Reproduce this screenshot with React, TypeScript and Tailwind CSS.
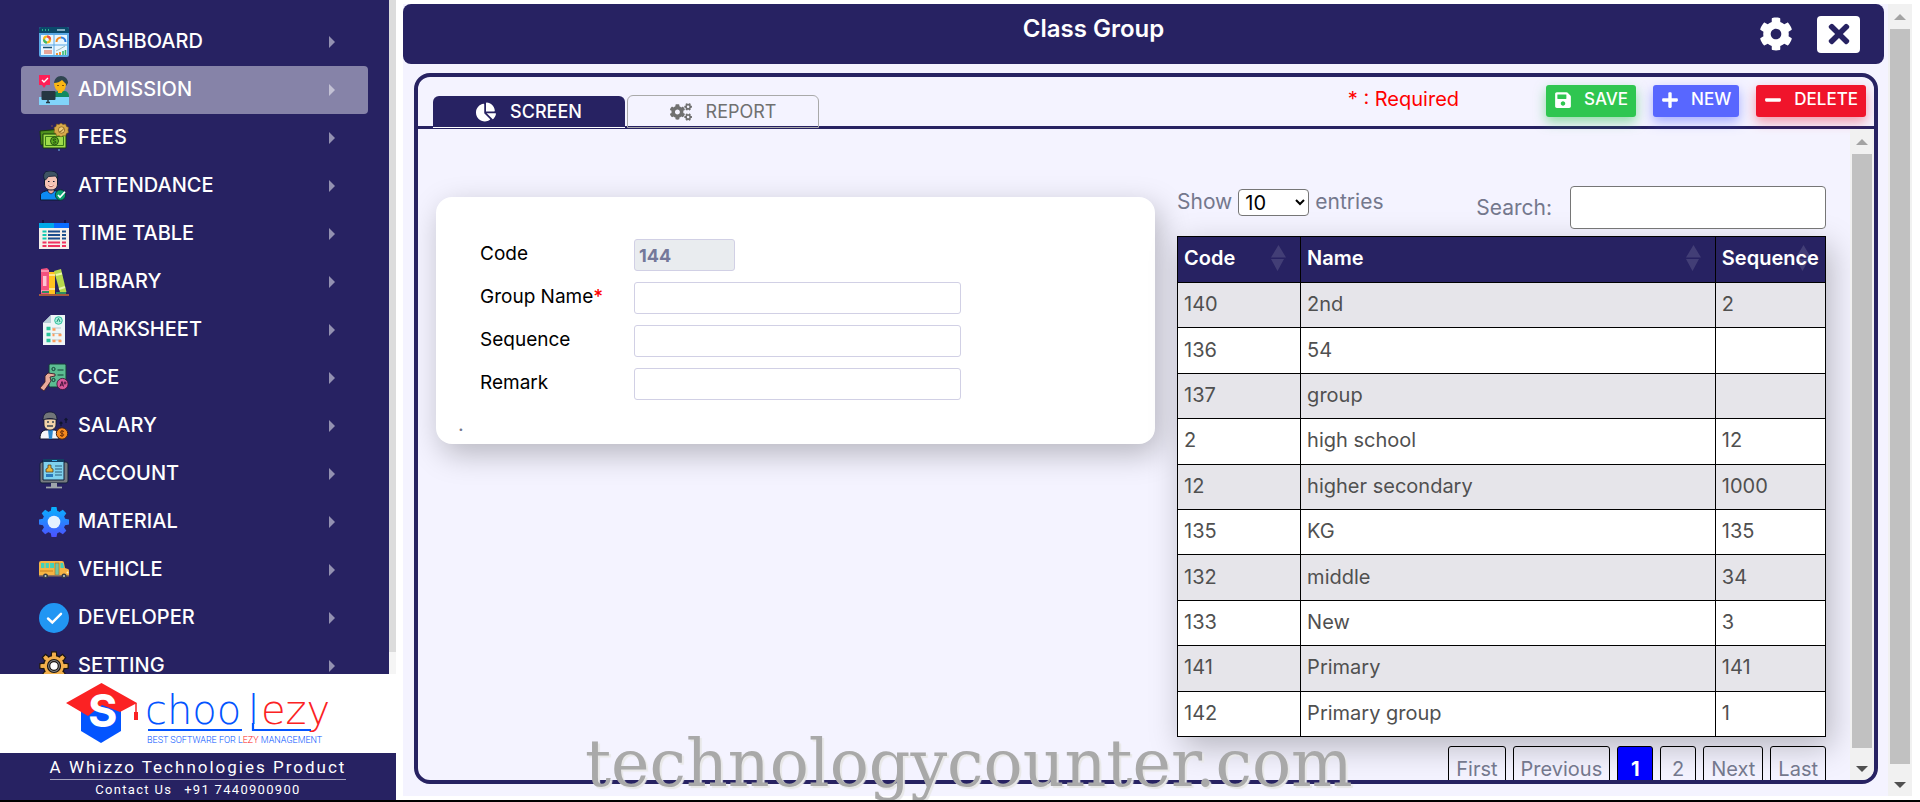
import React, { useState } from "react";
import { FaChartPie, FaCog, FaCogs, FaMinus, FaPlus, FaSave, FaTimes } from "react-icons/fa";

const menuItems = [
  { name: "DASHBOARD", icon: <DashboardIcon /> },
  { name: "ADMISSION", icon: <AdmissionIcon /> },
  { name: "FEES", icon: <FeesIcon /> },
  { name: "ATTENDANCE", icon: <AttendanceIcon /> },
  { name: "TIME TABLE", icon: <TimeTableIcon /> },
  { name: "LIBRARY", icon: <LibraryIcon /> },
  { name: "MARKSHEET", icon: <MarksheetIcon /> },
  { name: "CCE", icon: <CceIcon /> },
  { name: "SALARY", icon: <SalaryIcon /> },
  { name: "ACCOUNT", icon: <AccountIcon /> },
  { name: "MATERIAL", icon: <MaterialIcon /> },
  { name: "VEHICLE", icon: <VehicleIcon /> },
  { name: "DEVELOPER", icon: <DeveloperIcon /> },
  { name: "SETTING", icon: <SettingIcon /> },
];

const groups = [
  { code: "140", name: "2nd", sequence: "2" },
  { code: "136", name: "54", sequence: "" },
  { code: "137", name: "group", sequence: "" },
  { code: "2", name: "high school", sequence: "12" },
  { code: "12", name: "higher secondary", sequence: "1000" },
  { code: "135", name: "KG", sequence: "135" },
  { code: "132", name: "middle", sequence: "34" },
  { code: "133", name: "New", sequence: "3" },
  { code: "141", name: "Primary", sequence: "141" },
  { code: "142", name: "Primary group", sequence: "1" },
];

const columns = [
  { label: "Code", width: "w-[19%]" },
  { label: "Name", width: "w-[64%]" },
  { label: "Sequence", width: "w-[17%]" },
];

const pages = ["First", "Previous", "1", "2", "Next", "Last"];

const gearTeeth = [0, 45, 90, 135, 180, 225, 270, 315];

function Svg({ children }: { children: React.ReactNode }) {
  return (
    <svg viewBox="0 0 30 30" className="size-[30px] shrink-0" aria-hidden="true">
      {children}
    </svg>
  );
}

function DashboardIcon() {
  return (
    <Svg>
      <rect x="0" y="0" width="30" height="30" rx="2" fill="#5aa9e6" />
      <path d="M0 6V2a2 2 0 0 1 2-2h26a2 2 0 0 1 2 2v4z" fill="#0b4a6b" />
      <path d="M3 3h1M6 3h1M9 3h1" stroke="#3ddc97" strokeWidth="1.4" />
      <path d="M18 3h8" stroke="#b9d7e8" strokeWidth="1.4" />
      <rect x="2" y="8" width="12.5" height="9.5" fill="#e8f6ff" />
      <rect x="15.5" y="8" width="12.5" height="9.5" fill="#e8f6ff" />
      <rect x="2" y="18.5" width="12.5" height="9.5" fill="#e8f6ff" />
      <rect x="15.5" y="18.5" width="12.5" height="9.5" fill="#e8f6ff" />
      <circle cx="8" cy="12.5" r="3" fill="none" stroke="#f6b91a" strokeWidth="2.2" />
      <path d="M8 9.5a3 3 0 0 1 3 3" fill="none" stroke="#e94c4c" strokeWidth="2.2" />
      <path d="M8 15.5a3 3 0 0 1-3-3" fill="none" stroke="#35b96f" strokeWidth="2.2" />
      <path d="M17.5 15a4.5 4.5 0 0 1 4.5-4.5" fill="none" stroke="#f08a24" strokeWidth="2" />
      <path d="M22 10.5a4.5 4.5 0 0 1 4.5 4.5" fill="none" stroke="#2f7fe0" strokeWidth="2" />
      <path d="M4 20.5h9" stroke="#184f72" strokeWidth="1.5" />
      <path d="M5 24h8M5 26h8" stroke="#e58a7a" strokeWidth="1.3" />
      <path d="M17 24l4-2 5-3" stroke="#8aa" strokeWidth="0.8" fill="none" />
      <path d="M18 28v-2M21 28v-3" stroke="#f08a24" strokeWidth="1.8" />
      <path d="M24 28v-4M26.5 28v-5" stroke="#35b96f" strokeWidth="1.6" />
    </Svg>
  );
}

function AdmissionIcon() {
  return (
    <Svg>
      <path d="M13 22c0-4 4-6 8-6h4c3 0 5 2 5 5v3H13z" fill="#128a5f" />
      <path d="M15 9c0-5 3-8 7-8s7 3 7 7l-2 3h-4z" fill="#2f4550" />
      <path d="M15 8c3 0 6-1 8-3l4 4c0 4-2 7-4 8v1h-4v-2c-2-1-4-4-4-8z" fill="#fbb713" />
      <path d="M18 10.5h2M23 10.5h2" stroke="#7a4b05" strokeWidth="0.9" />
      <path d="M0 22h30v8H0z" fill="#81d4fa" />
      <path d="M0 0h11v10H7l-2 3-2-3H0z" fill="#ff1f57" />
      <path d="M3 5l2 2 4-4" stroke="#fff" strokeWidth="1.4" fill="none" />
      <rect x="2.5" y="16" width="14" height="9" rx="1" fill="#263742" />
      <path d="M9 25v3M7 27.5h4" stroke="#263742" strokeWidth="1.5" />
    </Svg>
  );
}

function FeesIcon() {
  return (
    <Svg>
      <path d="M1 8l22-2v14L2 22z" fill="#4f8f1d" stroke="#173a0c" />
      <path d="M4 11h23v14H4z" fill="#9fdc4a" stroke="#173a0c" />
      <path d="M6.5 13.5h18v9h-18z" fill="none" stroke="#3b7d16" />
      <circle cx="15.5" cy="18" r="4" fill="#5cab22" stroke="#173a0c" strokeWidth="0.8" />
      <path d="M17 16.5c-3-1.5-4 1-1.5 1.5s1.5 3-1.5 1.7" fill="none" stroke="#173a0c" strokeWidth="0.9" />
      <path d="M22 0l2 1.5 2.5-.5 1 2.5 2 1-.5 2.5.5 2.5-2 1-1 2.5-2.5-.5-2 1.5-2-1.5-2.5.5-.5-2.5-2-1 .5-2.5-.5-2.5 2-1 .5-2.5 2.5.5z" fill="#d6a94a" stroke="#7c5618" strokeWidth="0.6" />
      <circle cx="22.5" cy="7" r="3.2" fill="#f0cd78" stroke="#7c5618" strokeWidth="0.7" />
      <path d="M20.5 8.5c2 0 3-1 4-3" stroke="#7c5618" fill="none" />
      <circle cx="20" cy="27" r="1" fill="#5a8ac9" />
      <circle cx="13" cy="3" r="0.7" fill="#b0683a" />
    </Svg>
  );
}

function AttendanceIcon() {
  return (
    <Svg>
      <path d="M1.5 29v-5c0-2 3-4 8-4.5h5c3 .5 6 1 7 3v6.5z" fill="#0d8bf2" stroke="#0c1830" />
      <path d="M9 16h6v5l-3 2-3-2z" fill="#eba79a" stroke="#0c1830" strokeWidth="0.7" />
      <path d="M5.5 6c0-4 3-5 6.5-5s6.5 1 6.5 5v7c0 4-3 6-6.5 6s-6.5-2-6.5-6z" fill="#f5c3b5" stroke="#0c1830" />
      <path d="M5 8c-1-4 0-6 2-7.5C11-.5 15 0 17 1.5c2 1.5 2 4 1.5 6.5l-2-3-7 .5L6.5 9z" fill="#3f5363" stroke="#0c1830" strokeWidth="0.8" />
      <path d="M9 10.5h1.5M14 10.5h1.5" stroke="#0c1830" strokeWidth="1.2" />
      <path d="M9.5 14.5c1.5 1.5 3.5 1.5 5 0" stroke="#a0403a" fill="#fff" strokeWidth="0.8" />
      <circle cx="21.5" cy="24" r="5.2" fill="#0aa06e" stroke="#0c2a30" strokeWidth="0.8" />
      <path d="M19 24l2 2.2 5-5.5" stroke="#fff" strokeWidth="1.7" fill="none" />
    </Svg>
  );
}

function TimeTableIcon() {
  return (
    <Svg>
      <path d="M0 4h15v5H0z" fill="#00a8e8" />
      <path d="M15 4h15v5H15z" fill="#0a6cff" />
      <path d="M0 9h30v21H0z" fill="#f6efe9" />
      <path d="M4 1v3M26 1v3" stroke="#14123f" strokeWidth="2" />
      <path d="M3.5 12.5h4M3.5 16h4M3.5 19.5h4" stroke="#12c9b2" strokeWidth="2.2" />
      <path d="M9 12.5h12M9 16h12M9 19.5h12M23 12.5h4M23 16h4M23 19.5h4" stroke="#1b4e8c" strokeWidth="2" />
      <path d="M3.5 23.5h4M9 23.5h12M23 23.5h4M3.5 27h4M9 27h12M23 27h4" stroke="#f0325f" strokeWidth="2.2" />
    </Svg>
  );
}

function LibraryIcon() {
  return (
    <Svg>
      <path d="M2 2l6-1 2 2v24H2z" fill="#f4527f" />
      <path d="M4 9h3.5v10H4z" fill="#ffc4d2" />
      <path d="M2 4h8M2 24h8" stroke="#ffd2dc" />
      <path d="M10 5h6v22h-6z" fill="#ffc21f" />
      <path d="M10 8h6M10 22h6" stroke="#fff0b3" strokeWidth="1.5" />
      <path d="M15 4l7-2 5.5 23-6 2z" fill="#b7d94c" />
      <path d="M17 8l6-1.5M20 22l6-2" stroke="#eaf7a8" strokeWidth="2" />
      <path d="M3 25h7M17 26h10" stroke="#2f8d62" strokeWidth="2" />
      <path d="M0 27h30v2H0z" fill="#a65a3e" />
    </Svg>
  );
}

function MarksheetIcon() {
  return (
    <Svg>
      <path d="M12 0h14v30H4V8z" fill="#eef5f6" />
      <path d="M12 0v8H4z" fill="#b8cfd8" />
      <circle cx="19.5" cy="5.5" r="3.8" fill="#a8efdc" stroke="#23bb96" strokeWidth="0.9" />
      <path d="M17.8 7l1.7-3.5L21 7" stroke="#148a6d" strokeWidth="0.9" fill="none" />
      <path d="M7.5 13.5h4M7.5 19.5h4M7.5 25.5h4" stroke="#2bc39c" strokeWidth="3.4" />
      <path d="M13 13h9M13 18.5h9M13 25h9" stroke="#b9ccd2" strokeWidth="1.2" />
      <path d="M13.5 14.5h3M19.5 20h3M13.5 20h2M19.5 26h3M13.5 26h3" stroke="#ff9c5a" strokeWidth="2.4" />
    </Svg>
  );
}

function CceIcon() {
  return (
    <Svg>
      <rect x="10" y="1" width="17" height="23" rx="1.5" fill="#5bbd92" stroke="#163d38" />
      <circle cx="14.5" cy="6" r="1.6" fill="none" stroke="#143a35" />
      <circle cx="14.5" cy="17" r="1.6" fill="none" stroke="#143a35" />
      <path d="M18.5 7h6M18.5 12h6" stroke="#143a35" strokeWidth="1.2" />
      <path d="M1 25l5-6v-6l3-3 7 1v2l-5 1 1 4-7 10z" fill="#e9ab9a" stroke="#3a1e2b" strokeWidth="0.9" />
      <circle cx="23.5" cy="21" r="5.6" fill="#d8579a" stroke="#40143a" strokeWidth="0.9" />
      <path d="M21 23.5l2-5 1.5 5M21.5 22h2.5M26 18.5v3M24.7 20h2.8" stroke="#40143a" fill="none" />
    </Svg>
  );
}

function SalaryIcon() {
  return (
    <Svg>
      <path d="M1 28c0-7 3-9 7-9h6c4 0 6 2 6 9z" fill="#f4f6f8" stroke="#10152f" />
      <path d="M9 19h5l-1 9h-3z" fill="#2e86c9" />
      <path d="M5 8h12v5c0 4-3 6-6 6s-6-2-6-6z" fill="#f3d3aa" stroke="#10152f" strokeWidth="0.8" />
      <path d="M4 9c0-5 2-8 7-8s7 3 7 8c-4-2-10-2-14 0z" fill="#717579" stroke="#10152f" strokeWidth="0.8" />
      <path d="M8 11h2M13 11h2M8 15h6" stroke="#3b4754" strokeWidth="1.5" />
      <circle cx="23" cy="22.5" r="5.7" fill="#f58a1f" stroke="#452211" />
      <path d="M25 20.5c-3.5-1.5-5 1.3-2 2s2 3.5-2 1.8M23 19v7" stroke="#6b2e0a" fill="none" />
      <path d="M22 15v-4M20.5 12.5L22 11l1.5 1.5M27 12V7M25.5 9L27 7.5 28.5 9" stroke="#10152f" strokeWidth="1.2" fill="none" />
    </Svg>
  );
}

function AccountIcon() {
  return (
    <Svg>
      <path d="M1 5a2 2 0 0 1 2-2h24a2 2 0 0 1 2 2v17a2 2 0 0 1-2 2H3a2 2 0 0 1-2-2z" fill="#767b80" stroke="#12203a" />
      <path d="M4 1h21v20H4z" fill="#80d2ee" stroke="#12203a" />
      <path d="M4 0h21v3H4z" fill="#123f63" />
      <path d="M13 1.5h5" stroke="#3bb4f0" />
      <path d="M7 13v-3l2-1V6h3v3l2 1v3z" fill="#e7b63b" stroke="#493014" strokeWidth="0.7" />
      <path d="M7 15h7v3H7z" fill="#2879bd" />
      <path d="M16 7h7M16 10h7M16 13h7M16 16h7" stroke="#2c5f7d" strokeWidth="1.2" />
      <path d="M12 24h6v4h-6z" fill="#9ea5aa" />
      <path d="M7 28.5h16" stroke="#9ea5aa" strokeWidth="1.7" />
    </Svg>
  );
}

function MaterialIcon() {
  return (
    <Svg>
      <defs>
        <linearGradient id="gear-blue" x1="0" y1="0" x2="0" y2="30" gradientUnits="userSpaceOnUse">
          <stop stopColor="#06b3ff" />
          <stop offset="1" stopColor="#4d50ff" />
        </linearGradient>
      </defs>
      <g fill="url(#gear-blue)">
        <circle cx="15" cy="15" r="11.5" />
        <path d="M12.5 0h5l1 5h-7zM12.5 30h5l1-5h-7zM0 12.5v5l5 1v-7zM30 12.5v5l-5 1v-7zM2.7 6.2l3.5-3.5 4.5 3-5 5zM27.3 6.2l-3.5-3.5-4.5 3 5 5zM2.7 23.8l3.5 3.5 4.5-3-5-5zM27.3 23.8l-3.5 3.5-4.5-3 5-5z" />
      </g>
      <circle cx="15" cy="15" r="6.3" fill="#e4f1ff" />
    </Svg>
  );
}

function VehicleIcon() {
  return (
    <Svg>
      <path d="M0 8a2 2 0 0 1 2-2h21a2 2 0 0 1 2 2l1 5 3 1a2 2 0 0 1 1 2v5H0z" fill="#f6b444" />
      <path d="M2 8h13v5H2z" fill="#3fd2bd" />
      <path d="M6 8v5M10.5 8v5" stroke="#f6b444" strokeWidth="1.2" />
      <path d="M16 8h4v12h-4z" fill="#71c4a4" stroke="#a67323" strokeWidth="0.6" />
      <path d="M21.5 8h2.5l1 5h-3.5z" fill="#3fd2bd" />
      <path d="M1 16h13" stroke="#c97e1e" />
      <path d="M0 20h30v1.5H0z" fill="#92755b" />
      <circle cx="6.5" cy="21" r="2.5" fill="#343c45" />
      <circle cx="6.5" cy="21" r="1" fill="#c5cdd2" />
      <circle cx="25" cy="21" r="2.5" fill="#343c45" />
      <circle cx="25" cy="21" r="1" fill="#c5cdd2" />
      <circle cx="28.5" cy="17.5" r="1" fill="#fff0b0" />
    </Svg>
  );
}

function DeveloperIcon() {
  return (
    <Svg>
      <circle cx="15" cy="15" r="15" fill="#2196f3" />
      <path d="M9 15.5l4.3 4L22 10.8" stroke="#fff" strokeWidth="2.4" fill="none" strokeLinecap="round" />
    </Svg>
  );
}

function SettingIcon() {
  return (
    <Svg>
      <g fill="#f3b04c" stroke="#1c1611" strokeWidth="1.2">
        {gearTeeth.map((angle) => (
          <path key={angle} d="M12 6l.8-5.2h4.4L18 6z" transform={`rotate(${angle} 15 15)`} />
        ))}
        <circle cx="15" cy="15" r="10.5" />
      </g>
      {/* covers the outlines where the teeth meet the rim */}
      {gearTeeth.map((angle) => (
        <path key={angle} d="M12.8 6.5l.6-4.5h3.2l.6 4.5z" fill="#f3b04c" transform={`rotate(${angle} 15 15)`} />
      ))}
      <circle cx="15" cy="15" r="6.5" fill="#84888c" stroke="#1c1611" strokeWidth="1.2" />
      <circle cx="15" cy="15" r="4.3" fill="#fff" stroke="#1c1611" strokeWidth="1.2" />
    </Svg>
  );
}

const BrandLogo = () => (
  <svg viewBox="0 0 264 66" className="h-[66px] w-[264px]" role="img" aria-label="Schoolezy">
    <path d="M15 28l20-10 20 10v22l-20 12-20-12z" fill="#0354ff" />
    <path d="M0 22L35.5 2 71 22 54 31 36 24 22 35z" fill="#fb2223" />
    <path d="M70 22v12" stroke="#fb2223" strokeWidth="1.5" />
    <path d="M68 31h4v8h-4z" fill="#fb2223" />
    <text x="22" y="46" fontFamily="Inter, sans-serif" fontSize="45" fontWeight="700" fill="#fff">
      S
    </text>
    <g fontFamily="DejaVu Sans, sans-serif" fontSize="40" fontWeight="200">
      <text x="79" y="43" fill="#0354ff">choo</text>
      <text x="182" y="43" fill="#0354ff">l</text>
      <text x="195" y="43" fill="#fb2223">ezy</text>
    </g>
    <path d="M82 49h94M187 42v7h58" fill="none" stroke="#0354ff" strokeWidth="2.2" />
    <text x="81" y="62" fontFamily="Roboto, sans-serif" fontSize="9" fontWeight="300" fill="#0354ff">
      BEST SOFTWARE FOR L<tspan fill="#fb2223">EZY</tspan> MANAGEMENT
    </text>
  </svg>
);

const ScrollRail = () => (
  <div className="flex w-6 shrink-0 flex-col items-center bg-[#f1f1f1] px-[2px]" aria-hidden="true">
    <svg viewBox="0 0 12 6" className="mt-[10px] mb-[9px] h-[6px] w-3 shrink-0">
      <path d="M0 6l6-6 6 6z" fill="#a3a3a3" />
    </svg>
    <div className="w-full flex-1 bg-[#c1c1c1]" />
    <svg viewBox="0 0 12 6" className="mt-[18px] mb-2 h-[6px] w-3 shrink-0">
      <path d="M0 0l6 6 6-6z" fill="#505050" />
    </svg>
  </div>
);

const Sidebar = () => {
  const [active, setActive] = useState("ADMISSION");

  return (
    <aside className="flex w-[396px] shrink-0 flex-col">
      <div className="flex min-h-0 flex-1">
        <nav className="min-w-0 flex-1 overflow-hidden bg-[#272262] px-[21px] pt-[18px]" aria-label="Modules">
          {menuItems.map((item) => (
            <a
              key={item.name}
              href="#"
              onClick={() => setActive(item.name)}
              className={`flex h-12 items-center gap-[9px] rounded pr-[33px] pl-[18px] text-xl font-medium text-white ${
                active === item.name ? "bg-[#8683a8]" : ""
              }`}
            >
              {item.icon}
              <span className="flex-1 pb-[2px]">{item.name}</span>
              <svg viewBox="0 0 6 12" className="h-3 w-[6px]" aria-hidden="true">
                <path d="M0 0l6 6-6 6z" fill="#ffffff" fillOpacity="0.5" />
              </svg>
            </a>
          ))}
        </nav>
        <div className="w-[7px] bg-[#f5f5f5] pb-[22px]" aria-hidden="true">
          <div className="h-full bg-[#dcdcdc]" />
        </div>
      </div>
      <div className="flex h-[79px] shrink-0 items-center justify-center bg-white">
        <BrandLogo />
      </div>
      <footer className="flex h-[47px] shrink-0 flex-col items-center bg-[#272262] font-[Roboto,sans-serif] text-white">
        <p className="border-b border-white/60 pt-[2px] text-[17px] leading-6 tracking-[2px]">A Whizzo Technologies Product</p>
        <p className="flex gap-3 text-[13px] leading-5 tracking-widest">
          <span>Contact Us</span>
          <span>+91 7440900900</span>
        </p>
      </footer>
    </aside>
  );
};

const Field = ({ id, label, required = false }: { id: string; label: string; required?: boolean }) => (
  <div className="flex h-8 items-center">
    <label htmlFor={id} className="w-[154px] pb-[2px] text-[19px] leading-6 text-black">
      {label}
      {required && <span className="font-medium text-[#ff0000]">*</span>}
    </label>
    <input id={id} type="text" className="h-full w-[327px] rounded-[3px] border border-[#d1d0e5] bg-white px-1 text-lg" />
  </div>
);

const GroupForm = () => (
  <form className="rounded-2xl bg-white pt-[42px] pb-2 pl-11 shadow-[5px_10px_30px_rgba(0,0,0,0.25)]">
    <div className="flex flex-col gap-[11px]">
      <div className="flex h-8 items-center">
        <label htmlFor="code" className="w-[154px] pb-[2px] text-[19px] leading-6 text-black">
          Code
        </label>
        <input
          id="code"
          type="text"
          readOnly
          value="144"
          className="h-full w-[101px] rounded-[3px] border border-[#d1d0e5] bg-[#e9ecef] px-1 text-lg font-bold text-[#74789a]"
        />
      </div>
      <Field id="group-name" label="Group Name" required />
      <Field id="sequence" label="Sequence" />
      <Field id="remark" label="Remark" />
    </div>
    <p className="mt-3 -ml-[22px] text-xl leading-6 text-[#74788d]">.</p>
  </form>
);

const SortIcon = () => (
  <svg viewBox="0 0 15 26" className="absolute top-2 right-[14px] h-[26px] w-[15px]" aria-hidden="true">
    <path d="M0 12.5L7.5 0 15 12.5zM0 14h13L6.5 26z" fill="#ffffff" fillOpacity="0.13" />
  </svg>
);

const GroupTable = () => {
  const [page, setPage] = useState("1");

  return (
    <section>
      <div className="-mt-[11px] flex items-start justify-between text-[21px] text-[#74788d]">
        <label className="flex items-center gap-[6px] pt-[2px] leading-7">
          Show
          <select className="h-[27px] w-[71px] rounded border border-[#767676] bg-white pl-[2px] text-xl leading-6 text-black">
            <option>10</option>
            <option>25</option>
            <option>50</option>
          </select>
          entries
        </label>
        <label className="flex items-center gap-[18px]">
          Search:
          <input type="search" className="h-[43px] w-64 rounded border border-[#767676] bg-white px-2" />
        </label>
      </div>

      <table className="mt-[7px] h-[501px] w-full table-fixed border-collapse bg-white text-xl text-[#505050] shadow-[5px_10px_30px_rgba(0,0,0,0.25)]">
        <thead>
          <tr className="h-[46px] bg-[#272262] text-left text-white">
            {columns.map((column) => (
              <th key={column.label} className={`relative border border-black px-[6px] pb-1 font-semibold ${column.width}`}>
                <SortIcon />
                <span className="relative">{column.label}</span>
              </th>
            ))}
          </tr>
        </thead>
        <tbody>
          {groups.map((group) => (
            <tr key={group.code} className="odd:bg-[#e6e5ea]">
              <td className="border border-black px-[6px] pb-[2px]">{group.code}</td>
              <td className="border border-black px-[6px] pb-[2px]">{group.name}</td>
              <td className="border border-black px-[6px] pb-[2px]">{group.sequence}</td>
            </tr>
          ))}
        </tbody>
      </table>

      <div className="mt-[9px] flex justify-end gap-[7px]">
        {pages.map((label) => (
          <button
            key={label}
            type="button"
            onClick={() => setPage(label)}
            className={`min-w-9 rounded-[3px] border border-black px-[7px] pt-2 pb-1 text-xl leading-7 ${
              page === label ? "bg-[#0000ff] font-bold text-white" : "text-[#74788d]"
            }`}
          >
            {label}
          </button>
        ))}
      </div>
    </section>
  );
};

const App = () => {
  return (
    <div className="relative flex h-screen gap-[7px] overflow-hidden border-b-2 border-black bg-white font-[Inter,sans-serif]">
      <Sidebar />

      <div className="my-1 mr-2 flex min-w-0 flex-1 bg-[#f4f3ff]">
        <div className="flex min-w-0 flex-1 flex-col">
          <header className="mr-1 flex h-[60px] shrink-0 items-center rounded-lg bg-[#272262] pr-6 pl-12 text-white">
            <h1 className="flex-1 self-start pt-[5px] text-center text-2xl leading-10 font-semibold">Class Group</h1>
            <div className="flex w-[124px] items-center justify-end gap-6">
              <button type="button" aria-label="Settings">
                <FaCog className="size-[34px]" />
              </button>
              <button
                type="button"
                aria-label="Close"
                className="grid h-[37px] w-[43px] place-items-center rounded bg-white text-[#272262]"
              >
                <FaTimes className="size-[30px]" />
              </button>
            </div>
          </header>

          <main className="mt-[9px] mr-[10px] mb-3 ml-[11px] flex min-h-0 flex-1 flex-col overflow-hidden rounded-2xl border-4 border-[#272262]">
            <div className="flex h-[52px] shrink-0 justify-between border-b-[3px] border-[#272262] pr-2 pl-[15px]">
              <div className="-mb-[2px] flex items-end gap-[2px] text-lg" role="tablist">
                <button
                  type="button"
                  role="tab"
                  aria-selected="true"
                  className="flex h-8 w-48 items-center justify-center gap-[14px] rounded-t-md border-b border-white bg-[#272262] font-medium text-white"
                >
                  <FaChartPie className="size-5" />
                  SCREEN
                </button>
                <button
                  type="button"
                  role="tab"
                  aria-selected="false"
                  className="flex h-[33px] w-48 items-center justify-center gap-[14px] rounded-t-md border border-[#a9a9a9] text-[#707070]"
                >
                  <FaCogs className="size-[22px]" />
                  REPORT
                </button>
              </div>

              <div className="flex items-start gap-[17px] pt-2 text-[17px] font-medium text-white">
                <p className="mr-[70px] text-xl leading-7 font-normal text-[#ff0000]">* : Required</p>
                <button
                  type="button"
                  className="flex h-8 items-center gap-3 rounded-[3px] bg-[#2fc650] px-2 pb-[2px] shadow-[0_5px_12px_rgba(47,198,80,0.5)]"
                >
                  <FaSave className="size-[18px]" />
                  SAVE
                </button>
                <button
                  type="button"
                  className="flex h-8 items-center gap-3 rounded-[3px] bg-[#5867ff] px-2 pb-[2px] shadow-[0_5px_12px_rgba(88,103,255,0.5)]"
                >
                  <FaPlus className="size-[18px]" />
                  NEW
                </button>
                <button
                  type="button"
                  className="flex h-8 items-center gap-3 rounded-[3px] bg-[#f0142b] px-2 pb-[2px] shadow-[0_5px_12px_rgba(240,20,43,0.4)]"
                >
                  <FaMinus className="size-[18px]" />
                  DELETE
                </button>
              </div>
            </div>

            <div className="flex min-h-0 flex-1">
              <div className="grid min-w-0 flex-1 grid-cols-[719fr_649fr] items-start gap-[22px] overflow-hidden pt-[68px] pr-6 pl-[18px]">
                <GroupForm />
                <GroupTable />
              </div>
              <ScrollRail />
            </div>
          </main>
        </div>
        <ScrollRail />
      </div>

      <p className="pointer-events-none absolute bottom-1 left-[585px] font-['DejaVu_Serif',serif] text-[65px] leading-none text-[#a9a9a9] [text-shadow:2px_2px_1px_#e8e8e8]">
        technologycounter.com
      </p>
    </div>
  );
};
export default App;
